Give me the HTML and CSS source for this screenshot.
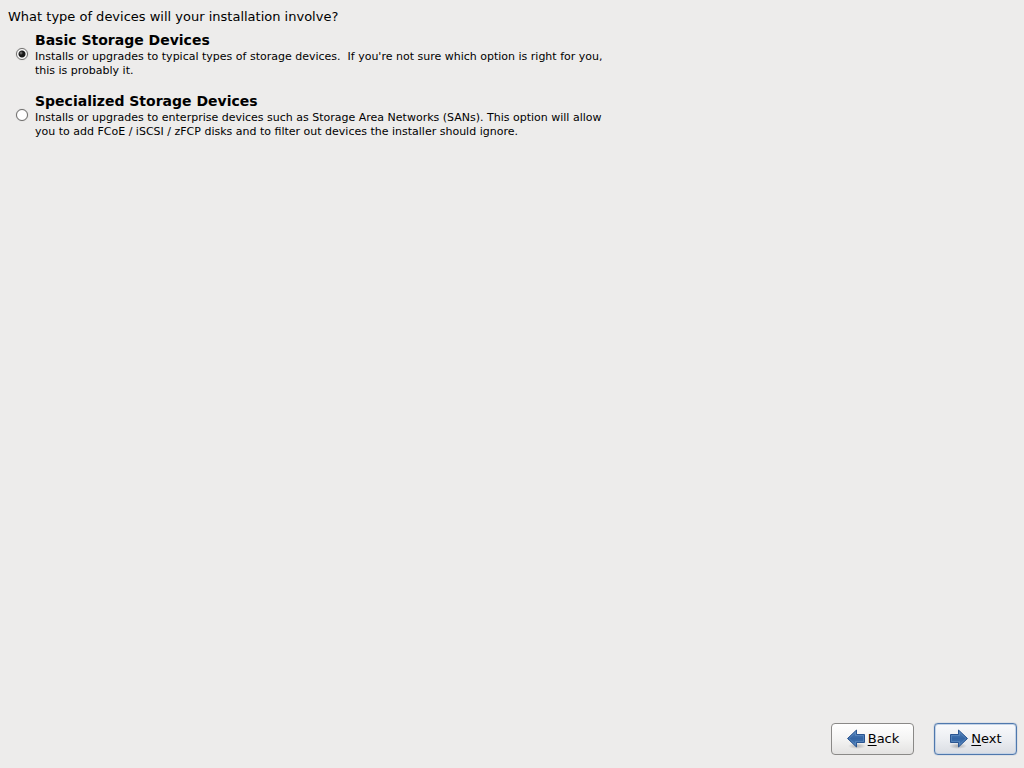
FILE: index.html
```
<!DOCTYPE html>
<html lang="en">
<head>
	<meta charset="UTF-8">
	<title>Storage Devices</title>
	<link rel="stylesheet" href="styles.css">
</head>
<body>
	<form class="installer">
		<fieldset class="devices">
			<legend>What type of devices will your installation involve?</legend>
			<div class="option">
				<input type="radio" name="storage" id="basic" value="basic" checked>
				<label for="basic">
					<strong>Basic Storage Devices</strong>
					<span>Installs or upgrades to typical types of storage devices.&nbsp; If you're not sure which option is right for you, this is probably it.</span>
				</label>
			</div>
			<div class="option">
				<input type="radio" name="storage" id="special" value="special">
				<label for="special">
					<strong>Specialized Storage Devices</strong>
					<span>Installs or upgrades to enterprise devices such as Storage Area Networks (SANs). This option will allow you to add FCoE / iSCSI / zFCP disks and to filter out devices the installer should ignore.</span>
				</label>
			</div>
		</fieldset>
		<div class="buttons">
			<button type="button" class="btn" accesskey="b">
				<svg class="arrow" viewBox="0 0 20 20" width="20" height="20" aria-hidden="true">
					<defs>
						<radialGradient id="shadow">
							<stop offset="0" stop-color="#000" stop-opacity=".25"/>
							<stop offset="1" stop-color="#000" stop-opacity="0"/>
						</radialGradient>
						<linearGradient id="blue" x1="0" y1="0" x2="0" y2="1">
							<stop offset="0" stop-color="#5585bd"/>
							<stop offset=".5" stop-color="#3465a4"/>
							<stop offset="1" stop-color="#4a7cb8"/>
						</linearGradient>
					</defs>
					<ellipse cx="11" cy="17" rx="9" ry="3" fill="url(#shadow)"/>
					<path class="shape" d="M1.5 9.5L10.5 1V5.5H18.5V13.5H10.5V18Z"/>
					<path class="shine" d="M3 9.5L9.5 3.3V6.5H17.5V12.5H9.5V15.7Z"/>
				</svg>
				<span><u>B</u>ack</span>
			</button>
			<button type="button" class="btn btn-next" accesskey="n">
				<svg class="arrow" viewBox="0 0 20 20" width="20" height="20" aria-hidden="true">
					<ellipse cx="9" cy="17" rx="9" ry="3" fill="url(#shadow)"/>
					<path class="shape" d="M18.5 9.5L9.5 1V5.5H1.5V13.5H9.5V18Z"/>
					<path class="shine" d="M17 9.5L10.5 3.3V6.5H2.5V12.5H10.5V15.7Z"/>
				</svg>
				<span><u>N</u>ext</span>
			</button>
		</div>
	</form>
</body>
</html>
```

FILE: styles.css
```
body{
	margin:0;
	background: #edeceb;
	color:#000;
	font:13px/16px "DejaVu Sans", sans-serif;
}
.installer{
	display: flex;
	flex-direction: column;
	justify-content: space-between;
	box-sizing: border-box;
	min-height: 100vh;
	padding: 9px 7px 13px 8px;
}
.devices{
	border:0;
	margin:0;
	padding:0;
}
.devices legend{
	padding:0;
	margin-bottom: 7px;
}
.option{
	display: flex;
	align-items: flex-start;
	gap:7px;
	margin:0 0 15px 8px;
}
.option input{
	appearance: none;
	flex:none;
	box-sizing: border-box;
	width:12px;
	height: 12px;
	margin:16px 0 0;
	border:1px solid #6f6e6c;
	border-radius: 50%;
	background: #fff;
	box-shadow: 0 0 1px #aaa;
}
.option input:checked{
	background: radial-gradient(circle at 4px 4px, #888, transparent 2px), radial-gradient(circle, #1a1a1a 0 3px, #fff 4px);
}
.option label{
	max-width: 580px;
}
.option strong,
.option span{
	display: block;
}
.option strong{
	font-size: 14px;
	line-height: 16px;
	padding-bottom: 2px;
}
.option span{
	font-size: 11px;
	line-height: 14px;
}
.buttons{
	display: flex;
	justify-content: flex-end;
	gap:20px;
}
.btn{
	display: flex;
	align-items: center;
	justify-content: center;
	gap:2px;
	width:83px;
	height: 32px;
	padding:0;
	border:1px solid #8a8987;
	border-radius: 4px;
	background: linear-gradient(#fff, #f4f4f3 50%, #e3e2e1);
	color:#000;
	font:13px/16px "DejaVu Sans", sans-serif;
}
.btn span{
	padding-bottom: 1px;
}
.btn u{
	text-underline-offset: 2px;
}
.btn-next{
	border-color:#4f78ad;
	background: linear-gradient(#f9fafc, #eceef2 50%, #dadde3);
	box-shadow: 0 0 1px #4f78ad, inset 0 0 0 1px #c4d3e6;
}
.arrow .shape{
	fill:url(#blue);
	stroke:#2a5591;
}
.arrow .shine{
	fill:none;
	stroke:#729fcf;
	opacity: .4;
}
```
